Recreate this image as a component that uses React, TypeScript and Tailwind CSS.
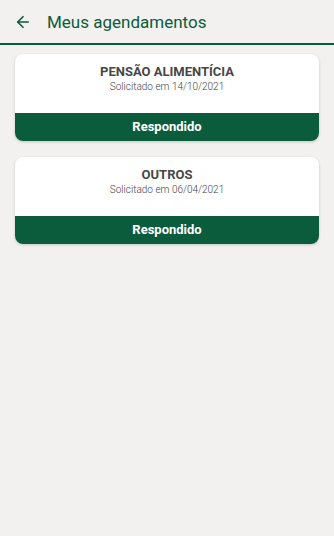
import { ArrowLeft } from 'lucide-react'

interface Agendamento {
  titulo: string
  data: string
  status: string
}

const AGENDAMENTOS: Agendamento[] = [
  { titulo: 'PENSÃO ALIMENTÍCIA', data: '14/10/2021', status: 'Respondido' },
  { titulo: 'OUTROS', data: '06/04/2021', status: 'Respondido' },
]

export default function App() {
  return (
    <div
      className="flex min-h-screen flex-col bg-[#f2f1ef]"
      style={{ fontFamily: 'Roboto, "Noto Sans", sans-serif' }}
    >
      <header className="flex h-[45px] shrink-0 items-center gap-[15px] border-b-2 border-[#0b5c3a] px-[14px] pt-[1px]">
        <ArrowLeft size={18} strokeWidth={2.2} className="text-[#0b5c3a]" />
        <h1 className="text-[17px] leading-none text-[#0b5c3a]">Meus agendamentos</h1>
      </header>

      <main className="flex flex-col gap-4 px-[15px] pt-[9px]">
        {AGENDAMENTOS.map((a) => (
          <div
            key={a.titulo}
            className="overflow-hidden rounded-lg bg-white shadow-[0_1px_3px_rgba(0,0,0,0.18)]"
          >
            <div className="flex h-[59px] flex-col items-center pt-[10px]">
              <div className="text-[13px] font-bold leading-[16px] text-[#474747]">{a.titulo}</div>
              <div className="mt-[1px] text-[10px] font-light leading-[12px] text-[#3f3f3f]">
                Solicitado em {a.data}
              </div>
            </div>
            <div className="flex h-[28px] items-center justify-center bg-[#0b5c3c] text-[13px] font-bold text-white">
              {a.status}
            </div>
          </div>
        ))}
      </main>
    </div>
  )
}
